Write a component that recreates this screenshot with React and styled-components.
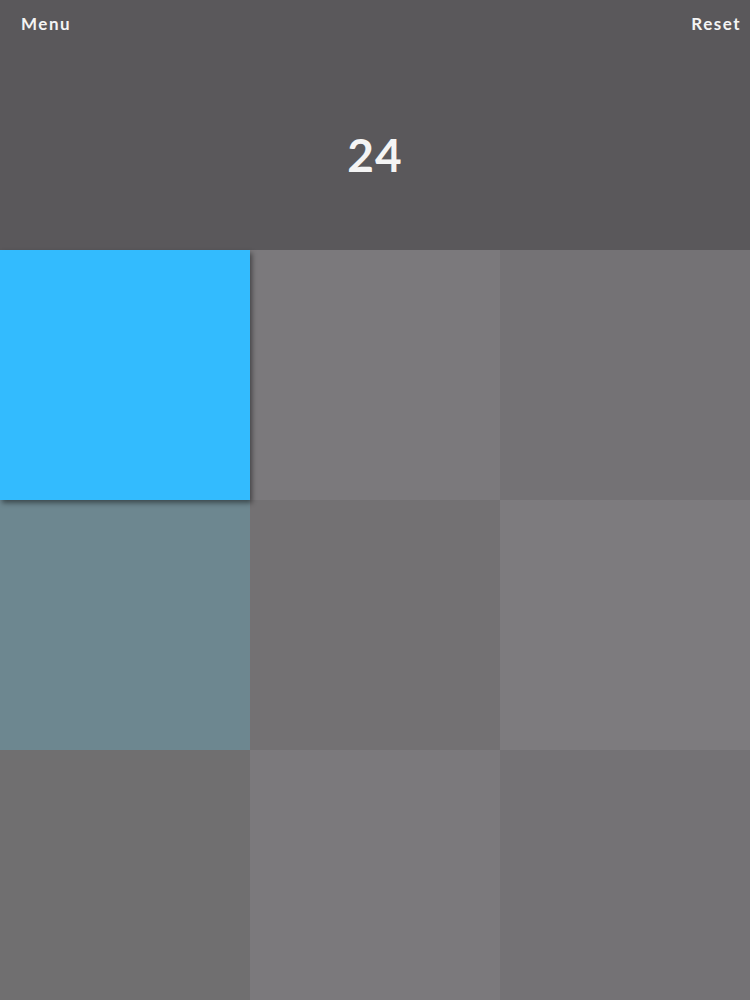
import React from 'react'
import styled, { createGlobalStyle } from 'styled-components'

const Global = createGlobalStyle`
body {
  margin: 0;
  background: #5a585b;
  font-family: Lato, "Open Sans", sans-serif;
}
`

const Screen = styled.div`
width: 750px;
height: 1000px;
display: flex;
flex-direction: column;
overflow: hidden;
`

const Header = styled.div`
height: 250px;
background: #5a585b;
display: flex;
flex-direction: column;
color: #f4f4f4;
`

const TopBar = styled.div`
display: flex;
justify-content: space-between;
padding: 13px 9px 0 21px;
`

const NavButton = styled.span`
font-size: 17px;
font-weight: 700;
letter-spacing: 1.5px;
cursor: pointer;
`

const Score = styled.div`
flex: 1;
display: flex;
justify-content: center;
align-items: center;
padding-top: 25px;
font-size: 46px;
font-weight: 700;
letter-spacing: 1px;
`

const Grid = styled.div`
display: grid;
grid-template-columns: repeat(3, 250px);
grid-template-rows: repeat(3, 250px);
`

const Tile = styled.div`
background: ${({ color }) => color};
position: relative;
z-index: ${({ active }) => (active ? 2 : 1)};
box-shadow: ${({ active }) => (active ? '2px 3px 5px rgba(0,0,0,0.45)' : 'none')};
`

const tiles = [
  { color: '#33bbfe', active: true },
  { color: '#7b797c' },
  { color: '#747275' },
  { color: '#6d8790' },
  { color: '#737173' },
  { color: '#7d7b7e' },
  { color: '#706f70' },
  { color: '#7b797c' },
  { color: '#747275' },
]

const App = () => {
  return (
    <Screen>
      <Global />
      <Header>
        <TopBar>
          <NavButton>Menu</NavButton>
          <NavButton>Reset</NavButton>
        </TopBar>
        <Score>24</Score>
      </Header>
      <Grid>
        {tiles.map((t, i) => (
          <Tile key={i} color={t.color} active={t.active} />
        ))}
      </Grid>
    </Screen>
  )
}

export default App
